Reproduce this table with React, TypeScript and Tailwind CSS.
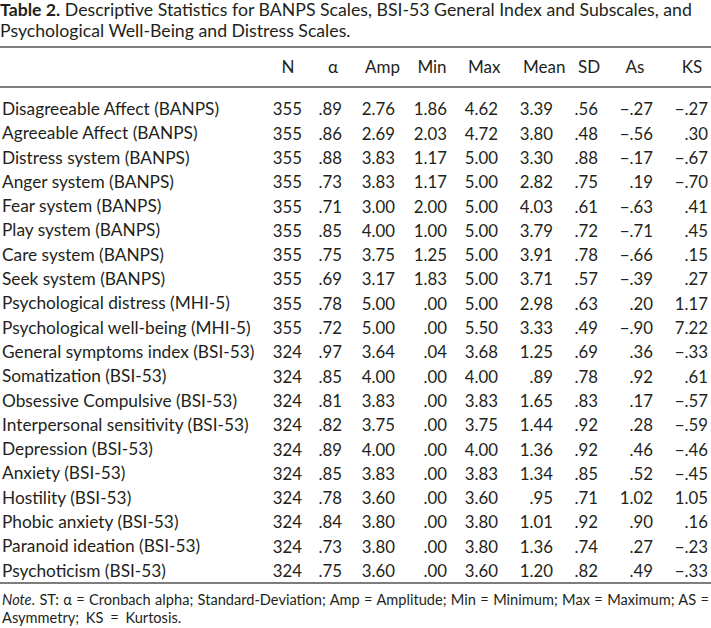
const rows: [string, ...string[]][] = [
  ['Disagreeable Affect (BANPS)', '355', '.89', '2.76', '1.86', '4.62', '3.39', '.56', '−.27', '−.27'],
  ['Agreeable Affect (BANPS)', '355', '.86', '2.69', '2.03', '4.72', '3.80', '.48', '−.56', '.30'],
  ['Distress system (BANPS)', '355', '.88', '3.83', '1.17', '5.00', '3.30', '.88', '−.17', '−.67'],
  ['Anger system (BANPS)', '355', '.73', '3.83', '1.17', '5.00', '2.82', '.75', '.19', '−.70'],
  ['Fear system (BANPS)', '355', '.71', '3.00', '2.00', '5.00', '4.03', '.61', '−.63', '.41'],
  ['Play system (BANPS)', '355', '.85', '4.00', '1.00', '5.00', '3.79', '.72', '−.71', '.45'],
  ['Care system (BANPS)', '355', '.75', '3.75', '1.25', '5.00', '3.91', '.78', '−.66', '.15'],
  ['Seek system (BANPS)', '355', '.69', '3.17', '1.83', '5.00', '3.71', '.57', '−.39', '.27'],
  ['Psychological distress (MHI-5)', '355', '.78', '5.00', '.00', '5.00', '2.98', '.63', '.20', '1.17'],
  ['Psychological well-being (MHI-5)', '355', '.72', '5.00', '.00', '5.50', '3.33', '.49', '−.90', '7.22'],
  ['General symptoms index (BSI-53)', '324', '.97', '3.64', '.04', '3.68', '1.25', '.69', '.36', '−.33'],
  ['Somatization (BSI-53)', '324', '.85', '4.00', '.00', '4.00', '.89', '.78', '.92', '.61'],
  ['Obsessive Compulsive (BSI-53)', '324', '.81', '3.83', '.00', '3.83', '1.65', '.83', '.17', '−.57'],
  ['Interpersonal sensitivity (BSI-53)', '324', '.82', '3.75', '.00', '3.75', '1.44', '.92', '.28', '−.59'],
  ['Depression (BSI-53)', '324', '.89', '4.00', '.00', '4.00', '1.36', '.92', '.46', '−.46'],
  ['Anxiety (BSI-53)', '324', '.85', '3.83', '.00', '3.83', '1.34', '.85', '.52', '−.45'],
  ['Hostility (BSI-53)', '324', '.78', '3.60', '.00', '3.60', '.95', '.71', '1.02', '1.05'],
  ['Phobic anxiety (BSI-53)', '324', '.84', '3.80', '.00', '3.80', '1.01', '.92', '.90', '.16'],
  ['Paranoid ideation (BSI-53)', '324', '.73', '3.80', '.00', '3.80', '1.36', '.74', '.27', '−.23'],
  ['Psychoticism (BSI-53)', '324', '.75', '3.60', '.00', '3.60', '1.20', '.82', '.49', '−.33'],
];

// header label + left padding so it sits centred over the right-aligned numbers
const headers = [
  { label: 'N', pad: 'pl-[9px]' },
  { label: 'α', pad: 'pl-[22px]' },
  { label: 'Amp', pad: 'pl-[23px]' },
  { label: 'Min', pad: 'pl-[22px]' },
  { label: 'Max', pad: 'pl-[21px]' },
  { label: 'Mean', pad: 'pl-[25px]' },
  { label: 'SD', pad: 'pl-[25px]' },
  { label: 'As', pad: 'pl-[19px]' },
  { label: 'KS', pad: 'pl-[23px]' },
];

const grid = 'grid grid-cols-[265px_37px_40px_53px_52px_51px_55px_45px_55px_55px]';

const Rule = () => <div className="h-[2px] bg-[#7d7d7d]" />;

export default function App() {
  return (
    <div className="w-[711px] h-[628px] overflow-hidden bg-white text-[#231f20] font-['Lato','Noto_Sans',sans-serif]">
      <p className="text-[17.7px] leading-[21px] -mt-[1px] whitespace-nowrap">
        <span className="font-bold">Table 2.</span> Descriptive Statistics for BANPS Scales, BSI-53 General Index and Subscales, and
        <br />
        Psychological Well-Being and Distress Scales.
      </p>

      <div className="mt-[5px]">
        <Rule />
        <div className={`${grid} h-[38px] items-center text-[17px] pr-[3px]`}>
          <div />
          {headers.map((h) => (
            <div key={h.label} className={`text-center ${h.pad}`}>
              {h.label}
            </div>
          ))}
        </div>
        <Rule />

        <div className="pt-[8px]">
          {rows.map(([label, ...vals]) => (
            <div key={label} className={`${grid} h-[24.3px] items-center pr-[3px]`}>
              <div className="pl-[2px] whitespace-nowrap text-[17.3px]">{label}</div>
              {vals.map((v, i) => (
                <div key={i} className="text-right whitespace-nowrap text-[16.8px]">
                  {v}
                </div>
              ))}
            </div>
          ))}
        </div>
        <Rule />
      </div>

      <div className="mt-[7px] text-[14.6px] leading-[18px] px-[2px]">
        <p className="text-justify [text-align-last:justify]">
          <span className="italic">Note</span>. ST: α = Cronbach alpha; Standard-Deviation; Amp = Amplitude; Min = Minimum; Max = Maximum; AS =
        </p>
        <p className="[word-spacing:3px]">Asymmetry; KS = Kurtosis.</p>
      </div>
    </div>
  );
}
